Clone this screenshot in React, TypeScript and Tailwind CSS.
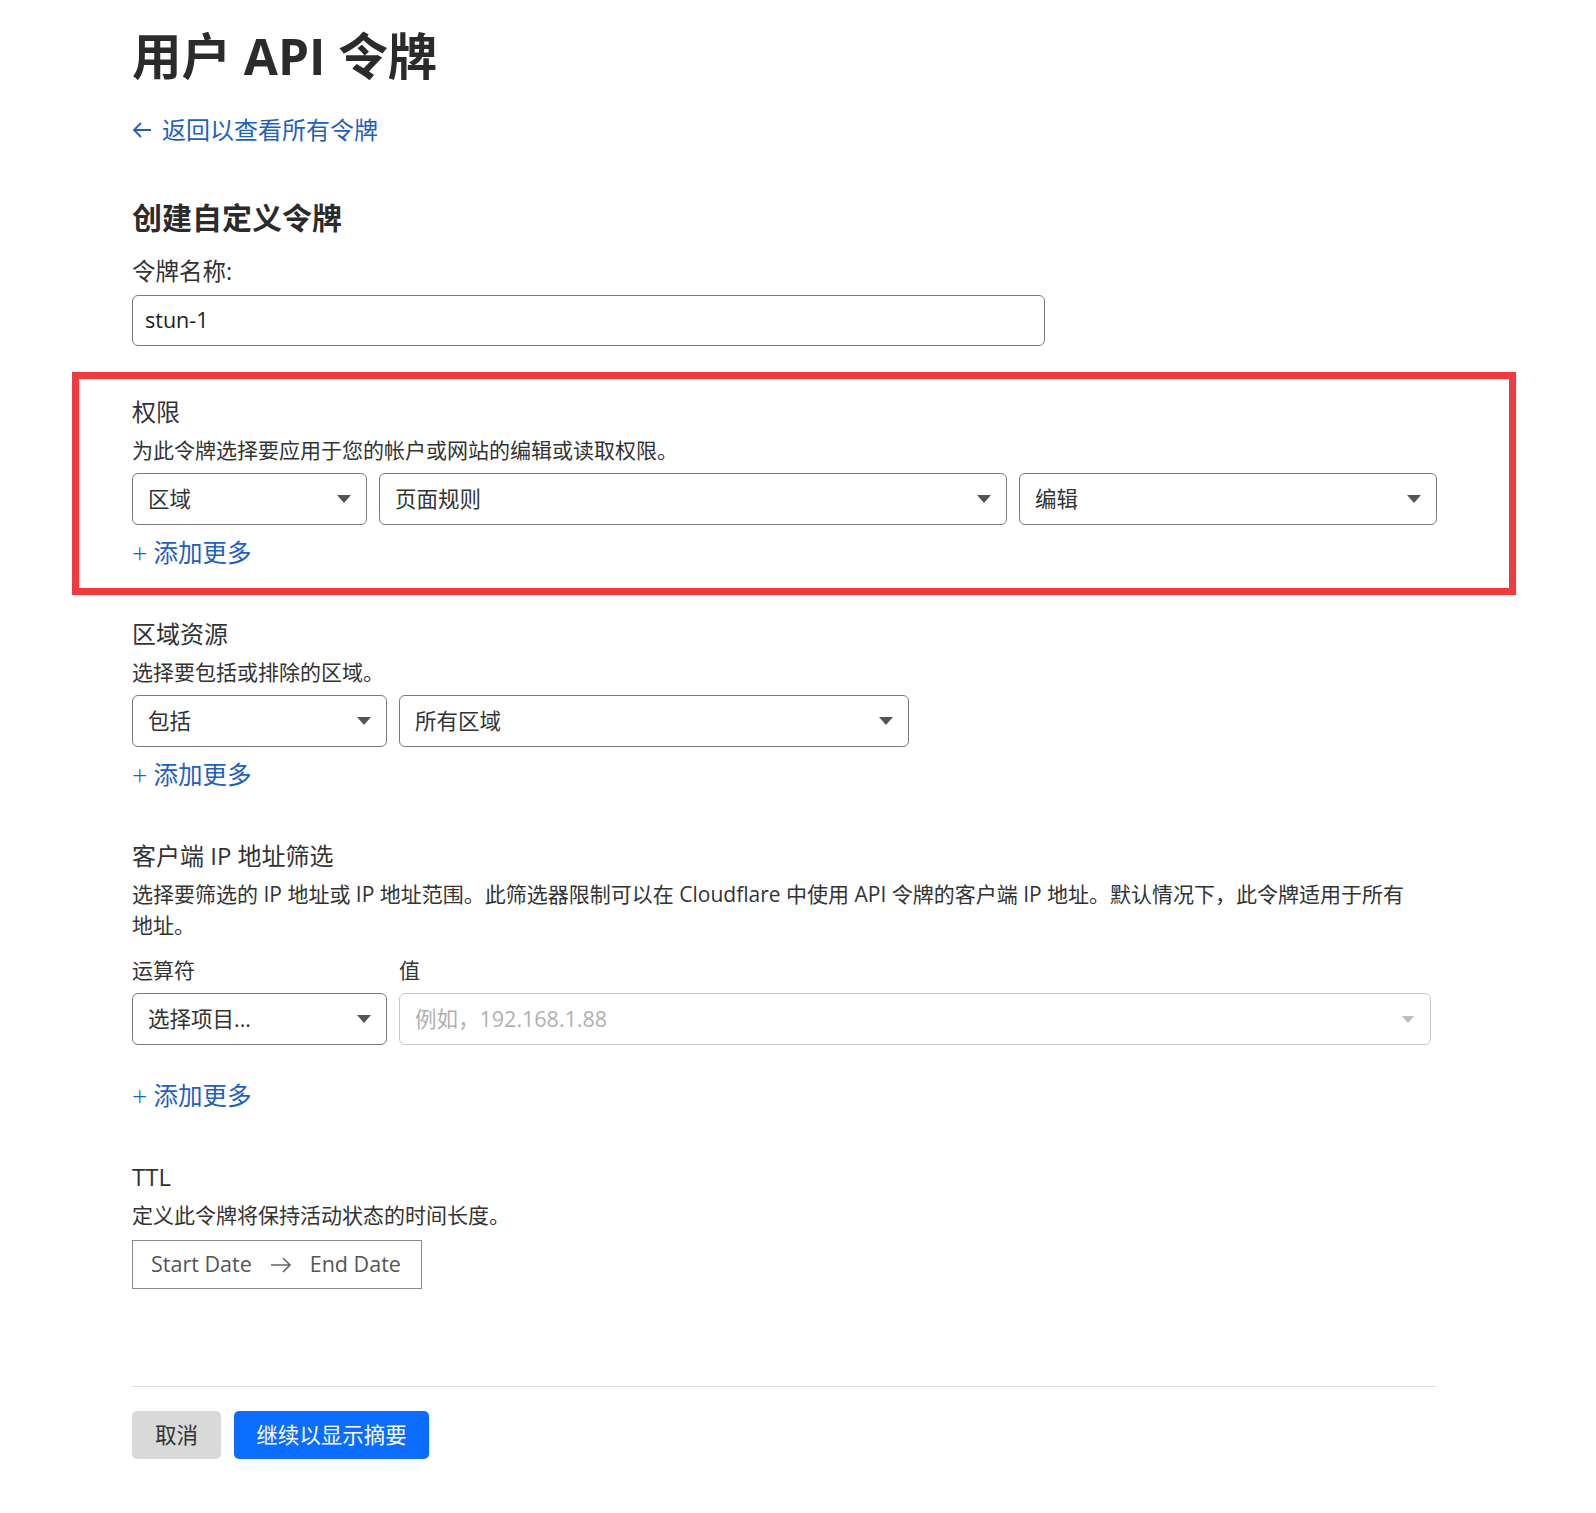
import type { ReactNode } from 'react';

const font = { fontFamily: '"Open Sans", "Noto Sans CJK SC", sans-serif' };

function Caret({ light }: { light?: boolean }) {
  return (
    <svg width="14" height={light ? 7 : 8} viewBox="0 0 14 8" className={light ? 'fill-[#bdbdbd]' : 'fill-[#555]'}>
      <path d="M0 0 L14 0 L7 8 Z" />
    </svg>
  );
}

function Select({ value, width, placeholder }: { value: string; width: string; placeholder?: boolean }) {
  return (
    <div
      className={`flex h-[52px] items-center justify-between rounded-[6px] border pl-[15px] pr-[15px] ${width} ${
        placeholder ? 'border-[#c8c8c8]' : 'border-[#7a7a7a]'
      }`}
    >
      <span className={`text-[21.5px] ${placeholder ? 'text-[#b0b0b0]' : 'text-[#333]'}`}>{value}</span>
      <Caret light={placeholder} />
    </div>
  );
}

function AddMore({ className }: { className: string }) {
  return (
    <div className={`flex h-[31px] items-center text-[24.5px] leading-[31px] text-[#1f5fbe] ${className}`}>
      <span className="mr-[6px] text-[27px] font-light">+</span>
      <span>添加更多</span>
    </div>
  );
}

function Heading({ children, className }: { children: ReactNode; className: string }) {
  return <h3 className={`text-[24px] leading-[31px] text-[#333] ${className}`}>{children}</h3>;
}

function Desc({ children, className }: { children: ReactNode; className: string }) {
  return <p className={`text-[21px] leading-[29px] text-[#333] ${className}`}>{children}</p>;
}

export default function App() {
  return (
    <div className="min-h-[1513px] w-[1596px] bg-white" style={font}>
      <div className="ml-[132px] w-[1304px] pt-[28px] pb-[60px]">
        <h1 className="text-[49.5px] font-bold leading-[57px] text-[#2b2b2b]">用户 API 令牌</h1>

        <a className="mt-[28px] flex h-[33px] items-center text-[24px] text-[#1f5fbe]">
          <svg width="20" height="18" viewBox="0 0 20 18" fill="none" stroke="currentColor" strokeWidth="1.8" className="mr-[10px]">
            <path d="M19 9 H2 M9 2 L2 9 L9 16" />
          </svg>
          返回以查看所有令牌
        </a>

        <h2 className="mt-[53px] text-[30px] font-bold leading-[37px] text-[#2b2b2b]">创建自定义令牌</h2>

        <label className="mt-[20px] block text-[23.5px] leading-[31px] text-[#333]">令牌名称:</label>
        <div className="mt-[8px] flex h-[51px] w-[913px] items-center rounded-[6px] border border-[#7a7a7a] px-[12px] text-[21.5px] text-[#222]">
          stun-1
        </div>

        <section className="mt-[26px] -ml-[60px] w-[1444px] border-[7px] border-[#f03a3e] pt-[17px] pb-[20px] pl-[53px]">
          <Heading className="">权限</Heading>
          <Desc className="mt-[9px]">为此令牌选择要应用于您的帐户或网站的编辑或读取权限。</Desc>
          <div className="mt-[8px] flex gap-[12px]">
            <Select value="区域" width="w-[235px]" />
            <Select value="页面规则" width="w-[628px]" />
            <Select value="编辑" width="w-[418px]" />
          </div>
          <AddMore className="mt-[12px]" />
        </section>

        <Heading className="mt-[23px]">区域资源</Heading>
        <Desc className="mt-[9px]">选择要包括或排除的区域。</Desc>
        <div className="mt-[8px] flex gap-[12px]">
          <Select value="包括" width="w-[255px]" />
          <Select value="所有区域" width="w-[510px]" />
        </div>
        <AddMore className="mt-[12px]" />

        <Heading className="mt-[50px]">客户端 IP 地址筛选</Heading>
        <p className="mt-[8px] text-[21px] leading-[31px] text-[#333]">
          <span className="block whitespace-nowrap">
            选择要筛选的 IP 地址或 IP 地址范围。此筛选器限制可以在 Cloudflare 中使用 API 令牌的客户端 IP 地址。默认情况下，此令牌适用于所有
          </span>
          <span className="block">地址。</span>
        </p>
        <div className="mt-[15px] flex gap-[12px]">
          <div className="w-[255px]">
            <div className="text-[21px] leading-[29px] text-[#333]">运算符</div>
            <div className="mt-[8px]">
              <Select value="选择项目..." width="w-[255px]" />
            </div>
          </div>
          <div className="w-[1032px]">
            <div className="text-[21px] leading-[29px] text-[#333]">值</div>
            <div className="mt-[8px]">
              <Select value="例如，192.168.1.88" width="w-[1032px]" placeholder />
            </div>
          </div>
        </div>
        <AddMore className="mt-[35px]" />

        <Heading className="mt-[50px]">TTL</Heading>
        <Desc className="mt-[9px]">定义此令牌将保持活动状态的时间长度。</Desc>
        <div className="mt-[10px] flex h-[49px] w-[290px] items-center border border-[#8a8a8a] pl-[18px] text-[21.5px] text-[#555]">
          <span>Start Date</span>
          <svg width="22" height="16" viewBox="0 0 22 16" fill="none" stroke="#666" strokeWidth="1.6" className="mx-[18px]">
            <path d="M1 8 H20 M13 1 L20 8 L13 15" />
          </svg>
          <span>End Date</span>
        </div>

        <hr className="mt-[97px] border-0 border-t border-[#dcdcdc]" />

        <div className="mt-[24px] flex gap-[13px]">
          <button className="h-[48px] w-[89px] rounded-[5px] bg-[#d9d9d9] text-[21.5px] text-[#333]">取消</button>
          <button className="h-[48px] w-[195px] rounded-[5px] bg-[#0b6dff] text-[21.5px] text-white">继续以显示摘要</button>
        </div>
      </div>
    </div>
  );
}
